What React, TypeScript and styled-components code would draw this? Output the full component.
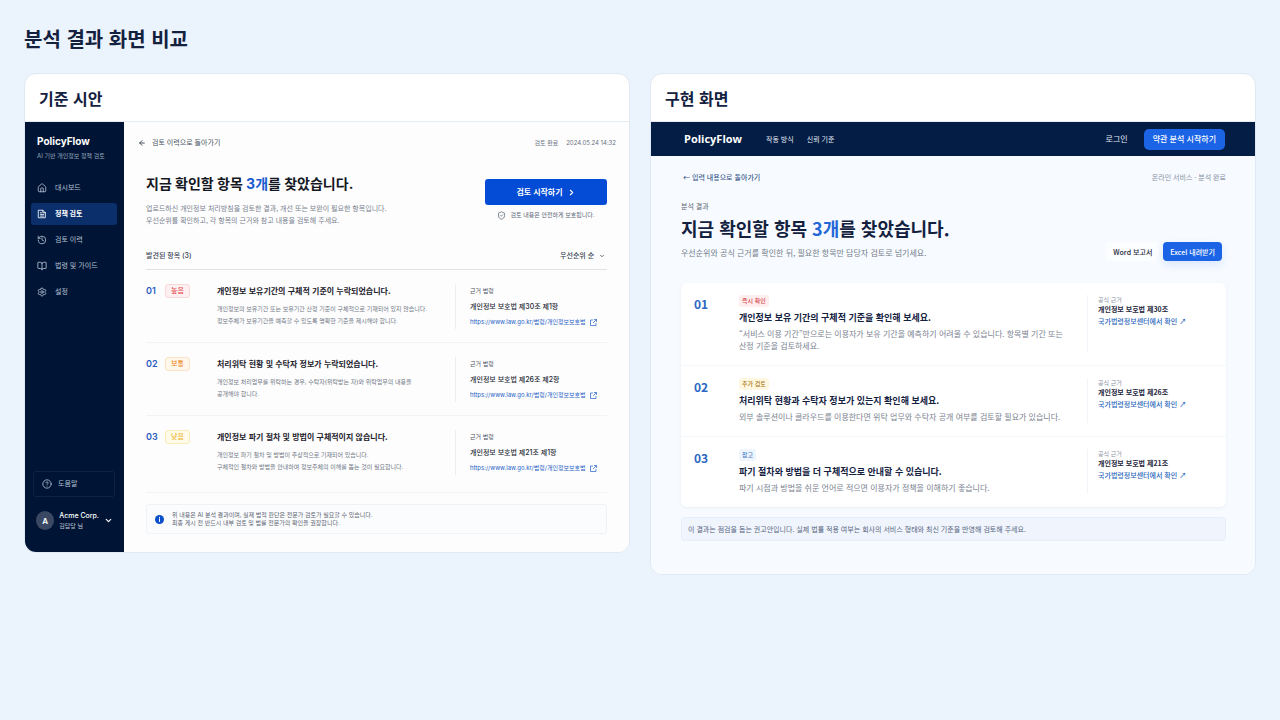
import React from "react";
import styled, { createGlobalStyle } from "styled-components";
import {
  ArrowLeft,
  BookOpen,
  ChevronDown,
  ChevronRight,
  CircleHelp,
  History,
  House,
  Settings,
  ShieldCheck,
} from "lucide-react";

const GlobalStyle = createGlobalStyle`
  * { box-sizing: border-box; }
  body {
    margin: 0;
    min-height: 100vh;
    background: #ebf3fc;
    color: #13213f;
    font-family: "Noto Sans CJK KR", sans-serif;
  }
  h1, h2, h3, h4, p, ul, ol { margin: 0; padding: 0; }
  ul, ol { list-style: none; }
  a { color: inherit; text-decoration: none; }
  button, select { font: inherit; border: 0; cursor: pointer; }
  svg { display: block; flex: none; }
`;

const Page = styled.div`
  padding: 24px;
`;

const PageTitle = styled.h1`
  font-size: 20px;
  line-height: 30px;
  font-weight: 700;
  margin-bottom: 19px;
`;

const Columns = styled.div`
  display: grid;
  grid-template-columns: 1fr 1fr;
  align-items: start;
  gap: 20px;
`;

const Card = styled.section`
  border: 1px solid #dfe8f4;
  border-radius: 12px;
  background: #fff;
  overflow: hidden;
`;

const CardTitle = styled.h2`
  padding: 12px 14px 11px;
  border-bottom: 1px solid #e6ecf4;
  font-size: 16px;
  line-height: 24px;
  font-weight: 700;
`;

/* ---------- draft screen ---------- */

const Draft = styled.div`
  display: grid;
  grid-template-columns: 99px 1fr;
  font-family: Inter, "Noto Sans CJK KR", sans-serif;
`;

const Sidebar = styled.aside`
  display: flex;
  flex-direction: column;
  padding: 11px 7px 21px 6px;
  background: #001535;
  color: #fff;
`;

const SideLogo = styled.div`
  padding: 0 6px;
  font-size: 10px;
  line-height: 16px;
  font-weight: 700;
`;

const SideTagline = styled.p`
  padding: 0 6px;
  font-size: 6px;
  line-height: 14px;
  color: #97a5bd;
  white-space: nowrap;
`;

const SideNav = styled.nav`
  display: flex;
  flex-direction: column;
  gap: 4px;
  margin-top: 14px;
`;

const SideLink = styled.a<{ $active?: boolean }>`
  display: flex;
  align-items: center;
  gap: 8px;
  height: 22px;
  padding: 0 6px;
  border-radius: 3px;
  font-size: 7px;
  line-height: 12px;
  font-weight: ${(p) => (p.$active ? 700 : 400)};
  color: ${(p) => (p.$active ? "#fff" : "#b4c0d3")};
  background: ${(p) => (p.$active ? "#0b2f6b" : "transparent")};
`;

const HelpLink = styled.a`
  display: flex;
  align-items: center;
  gap: 6px;
  height: 26px;
  margin: auto 2px 13px;
  padding: 0 8px;
  border: 1px solid #0d2342;
  border-radius: 3px;
  font-size: 7px;
  line-height: 12px;
  color: #b4c0d3;
`;

const Account = styled.button`
  display: flex;
  align-items: center;
  gap: 5px;
  padding: 0 4px 0 5px;
  background: none;
  color: #fff;
  text-align: left;
`;

const Avatar = styled.span`
  display: grid;
  place-items: center;
  width: 19px;
  height: 19px;
  border-radius: 50%;
  background: #3a4863;
  font-size: 8px;
  line-height: 12px;
  font-weight: 600;
`;

const AccountText = styled.span`
  flex: 1;
  font-size: 7px;
  line-height: 11px;
  font-weight: 500;
  white-space: nowrap;
  small {
    display: block;
    font-size: 6px;
    line-height: 10px;
    font-weight: 400;
    color: #c4cddc;
  }
`;

const DraftMain = styled.main`
  padding: 15px 13px 18px 14px;
  background: #fdfdfe;
`;

const DraftTop = styled.div`
  display: flex;
  align-items: center;
  justify-content: space-between;
  color: #6b7280;
  line-height: 12px;
`;

const BackLink = styled.a`
  display: flex;
  align-items: center;
  gap: 6px;
  font-size: 7px;
  color: #4b5563;
`;

const Meta = styled.p`
  display: flex;
  gap: 8px;
  font-size: 6px;
`;

const DraftBody = styled.div`
  padding: 24px 9px 0 8px;
`;

const DraftIntro = styled.div`
  display: flex;
  justify-content: space-between;
`;

const DraftHeading = styled.h3`
  margin-bottom: 7px;
  font-size: 14px;
  line-height: 22px;
  font-weight: 700;
  color: #14171f;
  white-space: nowrap;
  em { font-style: normal; color: #1a5bd0; }
`;

const DraftLead = styled.p`
  font-family: "Noto Sans CJK KR", sans-serif;
  font-size: 7px;
  line-height: 12px;
  color: #7b828e;
  white-space: nowrap;
`;

const StartColumn = styled.div`
  display: flex;
  flex-direction: column;
  align-items: center;
  gap: 4px;
  width: 122px;
  padding-top: 6px;
`;

const StartButton = styled.button`
  display: flex;
  align-items: center;
  justify-content: center;
  gap: 4px;
  width: 100%;
  height: 26px;
  border-radius: 3px;
  background: #044bd6;
  color: #fff;
  font-size: 8px;
  line-height: 12px;
  font-weight: 600;
`;

const SafeNote = styled.p`
  display: flex;
  align-items: center;
  gap: 4px;
  font-size: 6px;
  line-height: 12px;
  color: #5b6472;
`;

const ListBar = styled.div`
  display: flex;
  align-items: center;
  justify-content: space-between;
  margin-top: 24px;
  padding-bottom: 7px;
  border-bottom: 1px solid #dfe2e7;
  font-size: 7px;
  line-height: 12px;
  font-weight: 500;
  color: #374151;
`;

const SortLabel = styled.label`
  display: flex;
  align-items: center;
  gap: 4px;
  padding-right: 2px;
  select {
    appearance: none;
    padding: 0;
    background: none;
    color: inherit;
  }
`;

const DraftItem = styled.li`
  display: grid;
  grid-template-columns: 19px 52px 1fr 152px;
  padding: 14px 0 13px;
  border-bottom: 1px solid #f1f3f6;
  &:last-child { padding-bottom: 17px; }
`;

const DraftNumber = styled.span`
  font-size: 9px;
  line-height: 14px;
  font-weight: 600;
  color: #2a5cc0;
`;

const tones = {
  high: ["#e5484d", "#fdf0f0", "#fad7d8"],
  medium: ["#f08a24", "#fff7eb", "#fce4c6"],
  low: ["#eab530", "#fffbe8", "#f9ecb8"],
};

const Level = styled.span<{ $tone: keyof typeof tones }>`
  justify-self: start;
  align-self: start;
  width: 25px;
  height: 14px;
  border: 1px solid ${(p) => tones[p.$tone][2]};
  border-radius: 3px;
  background: ${(p) => tones[p.$tone][1]};
  color: ${(p) => tones[p.$tone][0]};
  font-size: 7px;
  line-height: 12px;
  font-weight: 500;
  text-align: center;
`;

const DraftItemTitle = styled.h4`
  margin-bottom: 5px;
  font-family: "Noto Sans CJK KR", sans-serif;
  font-size: 8px;
  line-height: 14px;
  font-weight: 600;
  color: #1c212b;
  white-space: nowrap;
`;

const DraftItemText = styled.p`
  font-size: 6px;
  line-height: 12px;
  color: #707783;
  white-space: nowrap;
`;

const DraftLaw = styled.div`
  padding-left: 14px;
  border-left: 1px solid #eceef2;
  font-size: 6px;
  line-height: 14px;
  color: #4b5563;
  strong {
    display: block;
    margin-top: 1px;
    font-size: 7px;
    line-height: 16px;
    font-weight: 500;
    color: #252a34;
  }
  a {
    display: flex;
    align-items: center;
    gap: 4px;
    color: #1f5fc4;
    white-space: nowrap;
  }
`;

const Caution = styled.div`
  display: flex;
  align-items: center;
  gap: 8px;
  margin-top: 11px;
  padding: 6px 8px;
  border: 1px solid #f0f2f5;
  border-radius: 3px;
  background: #fbfcfd;
  font-size: 6px;
  line-height: 8px;
  color: #5b6472;
`;

/* ---------- built screen ---------- */

const Built = styled.div`
  background: #f7fbff;
`;

const TopBar = styled.header`
  display: flex;
  align-items: center;
  height: 34px;
  padding: 0 30px 0 33px;
  background: #031d45;
  color: #e3eaf5;
  font-size: 7px;
  line-height: 12px;
`;

const TopLogo = styled.a`
  font-family: "Open Sans", "Noto Sans CJK KR", sans-serif;
  font-size: 11px;
  line-height: 16px;
  font-weight: 700;
  color: #fff;
`;

const TopNav = styled.nav`
  display: flex;
  gap: 13px;
  margin: 0 auto 0 24px;
`;

const LoginLink = styled.a`
  margin-right: 16px;
  font-size: 8px;
`;

const Cta = styled.button`
  height: 21px;
  padding: 0 9px;
  border-radius: 5px;
  background: #1b64e6;
  color: #fff;
  font-size: 8px;
  font-weight: 500;
`;

const BuiltBody = styled.main`
  padding: 15px 29px 33px 30px;
`;

const BuiltTop = styled.div`
  display: flex;
  justify-content: space-between;
  font-size: 7px;
  line-height: 12px;
  color: #868f9f;
  a {
    padding-left: 2px;
    font-weight: 500;
    color: #405a8c;
  }
`;

const BuiltIntro = styled.div`
  display: flex;
  align-items: flex-end;
  justify-content: space-between;
  margin: 18px 0 24px;
`;

const Eyebrow = styled.p`
  font-size: 7px;
  line-height: 10px;
  color: #5d6676;
`;

const BuiltHeading = styled.h3`
  margin: 4px 0 6px;
  font-size: 18px;
  line-height: 26px;
  font-weight: 700;
  white-space: nowrap;
  em { font-style: normal; color: #2468d8; }
`;

const BuiltLead = styled.p`
  font-size: 8px;
  line-height: 12px;
  color: #737b8a;
`;

const Downloads = styled.div`
  display: flex;
  gap: 4px;
  margin: 0 4px -2px 0;
`;

const Download = styled.button<{ $primary?: boolean }>`
  height: 19px;
  padding: 0 7px;
  border-radius: 4px;
  font-size: 7px;
  line-height: 12px;
  font-weight: 500;
  background: ${(p) => (p.$primary ? "#1b64e6" : "#fbfdff")};
  color: ${(p) => (p.$primary ? "#fff" : "#1f2a40")};
  box-shadow: ${(p) => (p.$primary ? "0 4px 8px #1b64e622" : "none")};
`;

const BuiltList = styled.ol`
  border-radius: 6px;
  background: #fff;
  box-shadow: 0 1px 3px #1b3a6b12;
`;

const BuiltItem = styled.li`
  display: grid;
  grid-template-columns: 45px 1fr 139px;
  padding: 12px 0 13px 13px;
  & + & { border-top: 1px solid #f5f8fb; }
`;

const BuiltNumber = styled.span`
  font-size: 12px;
  line-height: 18px;
  font-weight: 700;
  color: #2b66c4;
`;

const chips = {
  now: ["#d9484f", "#feeeee"],
  more: ["#a87718", "#fff7df"],
  note: ["#4d7fc4", "#eef5ff"],
};

const Finding = styled.div`
  display: flex;
  flex-direction: column;
  align-items: flex-start;
`;

const Chip = styled.span<{ $tone: keyof typeof chips }>`
  padding: 0 3px;
  border-radius: 3px;
  font-size: 6px;
  line-height: 12px;
  font-weight: 500;
  color: ${(p) => chips[p.$tone][0]};
  background: ${(p) => chips[p.$tone][1]};
`;

const BuiltItemTitle = styled.h4`
  margin: 4px 0 3px;
  font-size: 9px;
  line-height: 14px;
  font-weight: 700;
  white-space: nowrap;
`;

const BuiltItemText = styled.p`
  font-size: 8px;
  line-height: 12px;
  color: #7b8290;
  white-space: nowrap;
`;

const BuiltLaw = styled.div`
  padding-left: 10px;
  border-left: 1px solid #f1f4f8;
  font-size: 7px;
  line-height: 11px;
  white-space: nowrap;
  small {
    display: block;
    font-size: 6px;
    line-height: 9px;
    color: #8c94a3;
  }
  strong {
    display: block;
    margin-bottom: 1px;
    font-weight: 600;
    color: #1f2740;
  }
  a { color: #2a66bb; font-weight: 500; }
`;

const BuiltNote = styled.p`
  margin-top: 10px;
  padding: 5px 6px;
  border: 1px solid #e8effa;
  border-radius: 3px;
  background: #f0f5fd;
  font-size: 7px;
  line-height: 12px;
  color: #59657f;
`;

const ReviewIcon = ({ size }: { size: number }) => (
  <svg
    width={size}
    height={size}
    viewBox="0 0 24 24"
    fill="none"
    stroke="currentColor"
    strokeWidth="2"
    strokeLinecap="round"
    strokeLinejoin="round"
    aria-hidden="true"
  >
    <path d="M4 3h10l6 6v12H4z" />
    <path d="M14 3v6h6M8 9h3M8 13h8M8 17h8" />
  </svg>
);

const ExternalIcon = () => (
  <svg
    width="7"
    height="7"
    viewBox="0 0 14 14"
    fill="none"
    stroke="currentColor"
    strokeWidth="1.4"
    aria-hidden="true"
  >
    <path d="M6 2H1v11h11V8M8 1h5v5M13 1 6 8" />
  </svg>
);

const InfoDot = () => (
  <svg width="9" height="9" viewBox="0 0 18 18" aria-hidden="true">
    <circle cx="9" cy="9" r="9" fill="#0b4fc9" />
    <path d="M9 8v5M9 4.6v1.2" stroke="#fff" strokeWidth="2" strokeLinecap="round" />
  </svg>
);

const menu = [
  { label: "대시보드", Icon: House },
  { label: "정책 검토", Icon: ReviewIcon, active: true },
  { label: "검토 이력", Icon: History },
  { label: "법령 및 가이드", Icon: BookOpen },
  { label: "설정", Icon: Settings },
];

const draftItems = [
  {
    level: "높음",
    tone: "high" as const,
    title: "개인정보 보유기간의 구체적 기준이 누락되었습니다.",
    lines: [
      "개인정보의 보유기간 또는 보유기간 산정 기준이 구체적으로 기재되어 있지 않습니다.",
      "정보주체가 보유기간을 예측할 수 있도록 명확한 기준을 제시해야 합니다.",
    ],
    law: "개인정보 보호법 제30조 제1항",
  },
  {
    level: "보통",
    tone: "medium" as const,
    title: "처리위탁 현황 및 수탁자 정보가 누락되었습니다.",
    lines: [
      "개인정보 처리업무를 위탁하는 경우, 수탁자(위탁받는 자)와 위탁업무의 내용을",
      "공개해야 합니다.",
    ],
    law: "개인정보 보호법 제26조 제2항",
  },
  {
    level: "낮음",
    tone: "low" as const,
    title: "개인정보 파기 절차 및 방법이 구체적이지 않습니다.",
    lines: [
      "개인정보 파기 절차 및 방법이 추상적으로 기재되어 있습니다.",
      "구체적인 절차와 방법을 안내하여 정보주체의 이해를 돕는 것이 필요합니다.",
    ],
    law: "개인정보 보호법 제21조 제1항",
  },
];

const builtItems = [
  {
    chip: "즉시 확인",
    tone: "now" as const,
    title: "개인정보 보유 기간의 구체적 기준을 확인해 보세요.",
    lines: [
      "“서비스 이용 기간”만으로는 이용자가 보유 기간을 예측하기 어려울 수 있습니다. 항목별 기간 또는",
      "산정 기준을 검토하세요.",
    ],
    law: "개인정보 보호법 제30조",
  },
  {
    chip: "추가 검토",
    tone: "more" as const,
    title: "처리위탁 현황과 수탁자 정보가 있는지 확인해 보세요.",
    lines: [
      "외부 솔루션이나 클라우드를 이용한다면 위탁 업무와 수탁자 공개 여부를 검토할 필요가 있습니다.",
    ],
    law: "개인정보 보호법 제26조",
  },
  {
    chip: "참고",
    tone: "note" as const,
    title: "파기 절차와 방법을 더 구체적으로 안내할 수 있습니다.",
    lines: ["파기 시점과 방법을 쉬운 언어로 적으면 이용자가 정책을 이해하기 좋습니다."],
    law: "개인정보 보호법 제21조",
  },
];

const Lines = ({ lines }: { lines: string[] }) => (
  <>
    {lines.map((line, i) => (
      <React.Fragment key={line}>
        {i > 0 && <br />}
        {line}
      </React.Fragment>
    ))}
  </>
);

function DraftScreen() {
  return (
    <Draft>
      <Sidebar>
        <SideLogo>PolicyFlow</SideLogo>
        <SideTagline>AI 기반 개인정보 정책 검토</SideTagline>
        <SideNav>
          {menu.map(({ label, Icon, active }) => (
            <SideLink key={label} href="#" $active={active}>
              <Icon size={10} />
              {label}
            </SideLink>
          ))}
        </SideNav>
        <HelpLink href="#">
          <CircleHelp size={10} />
          도움말
        </HelpLink>
        <Account>
          <Avatar>A</Avatar>
          <AccountText>
            Acme Corp.
            <small>김담당 님</small>
          </AccountText>
          <ChevronDown size={9} strokeWidth={3} />
        </Account>
      </Sidebar>
      <DraftMain>
        <DraftTop>
          <BackLink href="#">
            <ArrowLeft size={8} strokeWidth={3} />
            검토 이력으로 돌아가기
          </BackLink>
          <Meta>
            <span>검토 완료</span>
            <time>2024.05.24 14:32</time>
          </Meta>
        </DraftTop>
        <DraftBody>
          <DraftIntro>
            <div>
              <DraftHeading>
                지금 확인할 항목 <em>3개</em>를 찾았습니다.
              </DraftHeading>
              <DraftLead>
                업로드하신 개인정보 처리방침을 검토한 결과, 개선 또는 보완이 필요한 항목입니다.
                <br />
                우선순위를 확인하고, 각 항목의 근거와 참고 내용을 검토해 주세요.
              </DraftLead>
            </div>
            <StartColumn>
              <StartButton>
                검토 시작하기
                <ChevronRight size={9} strokeWidth={3} />
              </StartButton>
              <SafeNote>
                <ShieldCheck size={9} />
                검토 내용은 안전하게 보호됩니다.
              </SafeNote>
            </StartColumn>
          </DraftIntro>
          <ListBar>
            <span>발견된 항목 (3)</span>
            <SortLabel>
              <select aria-label="정렬">
                <option>우선순위 순</option>
              </select>
              <ChevronDown size={6} strokeWidth={3} />
            </SortLabel>
          </ListBar>
          <ol>
            {draftItems.map((item, i) => (
              <DraftItem key={item.title}>
                <DraftNumber>0{i + 1}</DraftNumber>
                <Level $tone={item.tone}>{item.level}</Level>
                <div>
                  <DraftItemTitle>{item.title}</DraftItemTitle>
                  <DraftItemText>
                    <Lines lines={item.lines} />
                  </DraftItemText>
                </div>
                <DraftLaw>
                  근거 법령
                  <strong>{item.law}</strong>
                  <a href="#">
                    https://www.law.go.kr/법령/개인정보보호법
                    <ExternalIcon />
                  </a>
                </DraftLaw>
              </DraftItem>
            ))}
          </ol>
          <Caution>
            <InfoDot />
            <p>
              위 내용은 AI 분석 결과이며, 실제 법적 판단은 전문가 검토가 필요할 수 있습니다.
              <br />
              최종 게시 전 반드시 내부 검토 및 법률 전문가의 확인을 권장합니다.
            </p>
          </Caution>
        </DraftBody>
      </DraftMain>
    </Draft>
  );
}

function BuiltScreen() {
  return (
    <Built>
      <TopBar>
        <TopLogo href="#">PolicyFlow</TopLogo>
        <TopNav>
          <a href="#">작동 방식</a>
          <a href="#">신뢰 기준</a>
        </TopNav>
        <LoginLink href="#">로그인</LoginLink>
        <Cta>약관 분석 시작하기</Cta>
      </TopBar>
      <BuiltBody>
        <BuiltTop>
          <a href="#">← 입력 내용으로 돌아가기</a>
          <span>온라인 서비스 · 분석 완료</span>
        </BuiltTop>
        <BuiltIntro>
          <div>
            <Eyebrow>분석 결과</Eyebrow>
            <BuiltHeading>
              지금 확인할 항목 <em>3개</em>를 찾았습니다.
            </BuiltHeading>
            <BuiltLead>
              우선순위와 공식 근거를 확인한 뒤, 필요한 항목만 담당자 검토로 넘기세요.
            </BuiltLead>
          </div>
          <Downloads>
            <Download>Word 보고서</Download>
            <Download $primary>Excel 내려받기</Download>
          </Downloads>
        </BuiltIntro>
        <BuiltList>
          {builtItems.map((item, i) => (
            <BuiltItem key={item.title}>
              <BuiltNumber>0{i + 1}</BuiltNumber>
              <Finding>
                <Chip $tone={item.tone}>{item.chip}</Chip>
                <BuiltItemTitle>{item.title}</BuiltItemTitle>
                <BuiltItemText>
                  <Lines lines={item.lines} />
                </BuiltItemText>
              </Finding>
              <BuiltLaw>
                <small>공식 근거</small>
                <strong>{item.law}</strong>
                <a href="#">국가법령정보센터에서 확인 ↗</a>
              </BuiltLaw>
            </BuiltItem>
          ))}
        </BuiltList>
        <BuiltNote>
          이 결과는 점검을 돕는 권고안입니다. 실제 법률 적용 여부는 회사의 서비스 형태와 최신 기준을 반영해 검토해 주세요.
        </BuiltNote>
      </BuiltBody>
    </Built>
  );
}

export default function App() {
  return (
    <>
      <GlobalStyle />
      <Page lang="ko">
        <PageTitle>분석 결과 화면 비교</PageTitle>
        <Columns>
          <Card>
            <CardTitle>기준 시안</CardTitle>
            <DraftScreen />
          </Card>
          <Card>
            <CardTitle>구현 화면</CardTitle>
            <BuiltScreen />
          </Card>
        </Columns>
      </Page>
    </>
  );
}
